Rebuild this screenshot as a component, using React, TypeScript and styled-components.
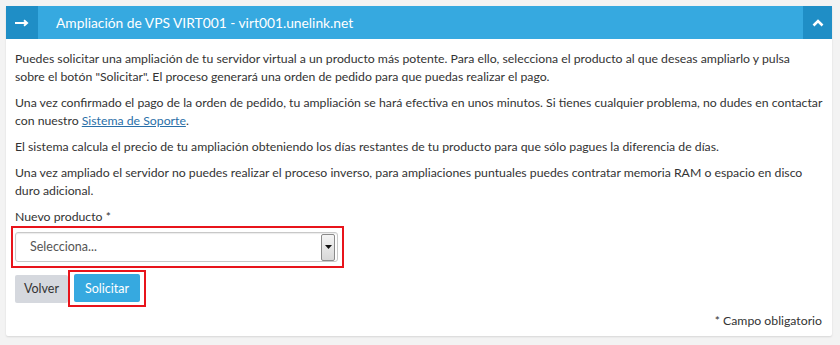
import React from 'react';
import styled, { createGlobalStyle } from 'styled-components';

const GlobalStyle = createGlobalStyle`
  html, body {
    margin: 0;
    padding: 0;
    background: #f3f3f3;
    font-family: Lato, "Open Sans", sans-serif;
    color: #333;
  }
`;

const Page = styled.div`
  padding: 6px 8px 8px 6px;
`;

const Panel = styled.div`
  background: #fff;
  box-shadow: 0 1px 2px rgba(0, 0, 0, 0.12);
  border-radius: 2px;
`;

const Header = styled.div`
  display: flex;
  align-items: stretch;
  height: 33px;
  background: #36a9e0;
  color: #fff;
`;

const HeaderIcon = styled.div<{ $w: number }>`
  width: ${(p) => p.$w}px;
  display: flex;
  align-items: center;
  justify-content: center;
  background: #1f8ec6;
`;

const Title = styled.h3`
  flex: 1;
  margin: 0;
  padding-left: 18px;
  font-size: 13.8px;
  font-weight: 400;
  line-height: 33px;
`;

const Body = styled.div`
  padding: 11px 9px 6px 9px;
  font-size: 12.25px;
  line-height: 18px;
`;

const Para = styled.p`
  margin: 0 0 8px;
`;

const Link = styled.a`
  color: #2a6fa8;
  text-decoration: underline;
`;

const Label = styled.label`
  display: block;
`;

const Highlight = styled.div<{ $inline?: boolean }>`
  display: ${(p) => (p.$inline ? 'inline-block' : 'block')};
  width: ${(p) => (p.$inline ? 'auto' : '323px')};
  border: 2px solid #e8141b;
  padding: ${(p) => (p.$inline ? '2px 4px 3px' : '4px 4px 4px 2px')};
`;

const Select = styled.div`
  display: flex;
  align-items: center;
  height: 28px;
  border: 1px solid #c8c8c8;
  border-radius: 3px;
  box-shadow: inset 0 1px 1px rgba(0, 0, 0, 0.08);
  padding: 0 2px 0 14px;
`;

const SelectText = styled.span`
  flex: 1;
  color: #555;
  font-size: 12.5px;
`;

const SelectArrow = styled.div`
  width: 12px;
  height: 25px;
  border: 1px solid #8a8a8a;
  border-radius: 2px;
  background: linear-gradient(#f4f4f4, #d8d8d8);
  display: flex;
  align-items: center;
  justify-content: center;
`;

const Actions = styled.div`
  display: flex;
  align-items: center;
  margin-top: 2px;
`;

const Button = styled.button<{ $primary?: boolean }>`
  height: 28px;
  border: none;
  border-radius: 2px;
  padding: 0 ${(p) => (p.$primary ? 11 : 9)}px;
  font-family: inherit;
  font-size: 12.5px;
  background: ${(p) => (p.$primary ? '#36a9e0' : '#d5d8de')};
  color: ${(p) => (p.$primary ? '#fff' : '#333')};
`;

const Footer = styled.div`
  text-align: right;
  margin-top: 5px;
  padding-right: 1px;
`;

export default function App() {
  return (
    <Page>
      <GlobalStyle />
      <Panel>
        <Header>
          <HeaderIcon $w={32}>
            <svg width="14" height="8" viewBox="0 0 14 8">
              <path d="M0 4h11.5M9 1.2 12.2 4 9 6.8" stroke="#fff" strokeWidth="1.8" fill="none" />
            </svg>
          </HeaderIcon>
          <Title>Ampliación de VPS VIRT001 - virt001.unelink.net</Title>
          <HeaderIcon $w={29}>
            <svg width="12" height="8" viewBox="0 0 12 8">
              <path d="M1.5 6.5 6 2l4.5 4.5" stroke="#fff" strokeWidth="2.6" fill="none" />
            </svg>
          </HeaderIcon>
        </Header>
        <Body>
          <Para>
            Puedes solicitar una ampliación de tu servidor virtual a un producto más potente. Para ello, selecciona el
            producto al que deseas ampliarlo y pulsa
            <br />
            sobre el botón "Solicitar". El proceso generará una orden de pedido para que puedas realizar el pago.
          </Para>
          <Para>
            Una vez confirmado el pago de la orden de pedido, tu ampliación se hará efectiva en unos minutos. Si tienes
            cualquier problema, no dudes en contactar con nuestro <Link href="#">Sistema de Soporte</Link>.
          </Para>
          <Para>
            El sistema calcula el precio de tu ampliación obteniendo los días restantes de tu producto para que sólo pagues
            la diferencia de días.
          </Para>
          <Para>
            Una vez ampliado el servidor no puedes realizar el proceso inverso, para ampliaciones puntuales puedes contratar
            memoria RAM o espacio en disco duro adicional.
          </Para>
          <Label>Nuevo producto *</Label>
          <Highlight style={{ marginLeft: -4 }}>
            <Select>
              <SelectText>Selecciona...</SelectText>
              <SelectArrow>
                <svg width="7" height="4" viewBox="0 0 7 4">
                  <path d="M0 0h7L3.5 4z" fill="#111" />
                </svg>
              </SelectArrow>
            </Select>
          </Highlight>
          <Actions>
            <Button>Volver</Button>
            <Highlight $inline>
              <Button $primary>Solicitar</Button>
            </Highlight>
          </Actions>
          <Footer>* Campo obligatorio</Footer>
        </Body>
      </Panel>
    </Page>
  );
}
